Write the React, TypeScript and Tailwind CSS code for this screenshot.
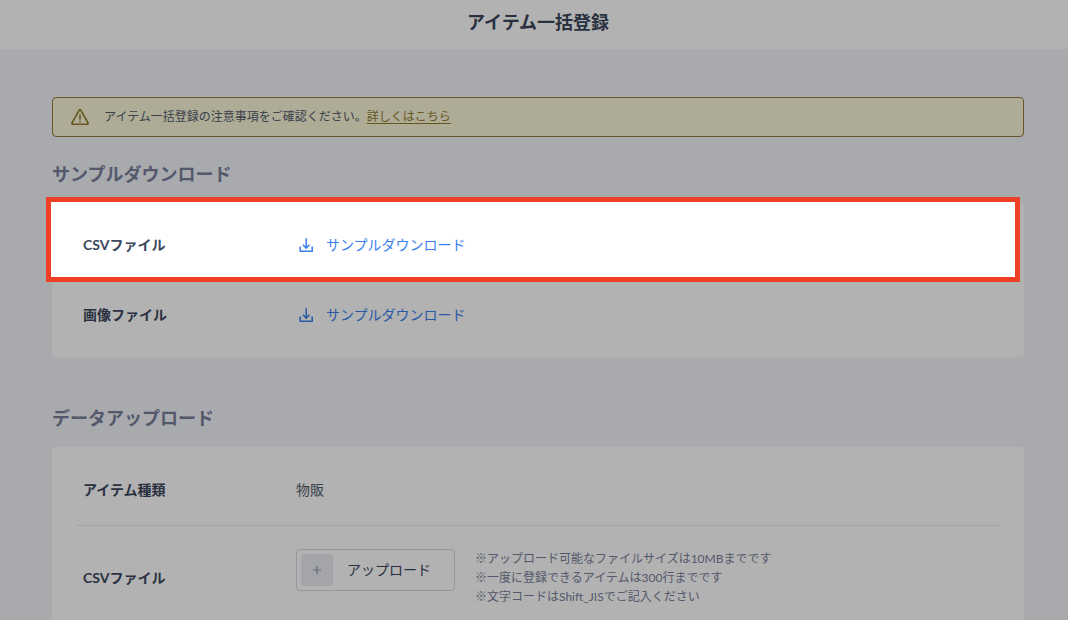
import type { ReactNode } from 'react'

function DownloadIcon() {
  return (
    <svg
      className="w-5 h-5 shrink-0"
      viewBox="0 0 20 20"
      fill="none"
      stroke="currentColor"
      strokeWidth="1.5"
      aria-hidden="true"
    >
      <path d="M4.2 11.6v4.7h12v-4.7" />
      <path d="M10.2 3.2v9.7M6.9 9.8l3.3 3.3 3.3-3.3" />
    </svg>
  )
}

function WarningIcon() {
  return (
    <svg
      className="w-5 h-5 shrink-0"
      viewBox="0 0 20 20"
      fill="none"
      stroke="currentColor"
      strokeWidth="1.6"
      strokeLinecap="round"
      strokeLinejoin="round"
      aria-hidden="true"
    >
      <path d="M9.3 3 2 15.9a.9.9 0 0 0 .8 1.4h14.4a.9.9 0 0 0 .8-1.4L10.7 3a.8.8 0 0 0-1.4 0z" />
      <path d="M10 8v4M10 14.4v.2" />
    </svg>
  )
}

interface SectionProps {
  title: string
  className?: string
  children: ReactNode
}

function Section({ title, className = '', children }: SectionProps) {
  return (
    <section className={className}>
      <h2 className="mb-[15px] text-lg leading-[27px] font-bold text-[#78809a]">{title}</h2>
      <div className="relative rounded bg-white px-6 py-[7px]">{children}</div>
    </section>
  )
}

interface RowProps {
  label: string
  className?: string
  children: ReactNode
}

function Row({ label, className = '', children }: RowProps) {
  return (
    <div className={`flex items-center pl-[7px] ${className}`}>
      <div className="w-[213px] shrink-0 text-sm font-bold text-[#3b475c]">{label}</div>
      {children}
    </div>
  )
}

function DownloadLink() {
  return (
    <a href="#" className="flex items-center gap-2.5 text-sm text-[#3b7ff0]">
      <DownloadIcon />
      サンプルダウンロード
    </a>
  )
}

export default function App() {
  return (
    <div className="relative h-screen overflow-hidden bg-[#f3f4fa] font-[Lato,'Noto_Sans_CJK_JP',sans-serif] lining-nums">
      <header className="flex h-[49px] items-center justify-center bg-white pb-1.5 pl-2">
        <h1 className="text-lg font-bold text-[#3b475c]">アイテム一括登録</h1>
      </header>

      <main className="pt-12 pr-11 pl-[52px]">
        <div className="flex h-10 items-center gap-3.5 rounded border border-[#967a3c] bg-[#f9f6d9] px-[17px] text-[#967a30]">
          <WarningIcon />
          <p className="text-xs text-[#545d6c]">
            アイテム一括登録の注意事項をご確認ください。
            <a href="#" className="text-[#967a30] underline underline-offset-2">
              詳しくはこちら
            </a>
          </p>
        </div>

        <Section title="サンプルダウンロード" className="mt-6">
          {/* スポットライト枠：外側の影で画面全体を暗くする */}
          <div className="pointer-events-none absolute -top-1.5 -left-1.5 right-1 z-10 h-[85px] border-[5px] border-[#ee4025] bg-white shadow-[0_0_0_2000px_rgba(0,0,0,0.3)]" />
          <Row label="CSVファイル" className="relative z-20 h-[70px]">
            <DownloadLink />
          </Row>
          <Row label="画像ファイル" className="h-[70px]">
            <DownloadLink />
          </Row>
        </Section>

        <Section title="データアップロード" className="mt-12">
          <Row label="アイテム種類" className="h-[72px] border-b border-[#e9eaf0]">
            <span className="text-sm text-[#545d6c]">物販</span>
          </Row>
          <Row label="CSVファイル" className="pt-[23px] pb-6">
            <div className="flex items-start gap-5">
              <button
                type="button"
                className="flex h-[42px] w-[159px] shrink-0 items-center gap-3.5 rounded border border-[#d6d8e4] px-1 text-sm text-[#3b475c]"
              >
                <span className="flex h-8 w-8 items-center justify-center rounded bg-[#ebecf2] text-[#8f96ae]">
                  <svg className="h-2 w-2" viewBox="0 0 8 8" stroke="currentColor" strokeWidth="1.2" aria-hidden="true">
                    <path d="M4 0v8M0 4h8" />
                  </svg>
                </span>
                アップロード
              </button>
              <ul className="text-xs leading-[19px] text-[#78809a]">
                <li>※アップロード可能なファイルサイズは10MBまでです</li>
                <li>※一度に登録できるアイテムは300行までです</li>
                <li>※文字コードはShift_JISでご記入ください</li>
              </ul>
            </div>
          </Row>
        </Section>
      </main>
    </div>
  )
}
